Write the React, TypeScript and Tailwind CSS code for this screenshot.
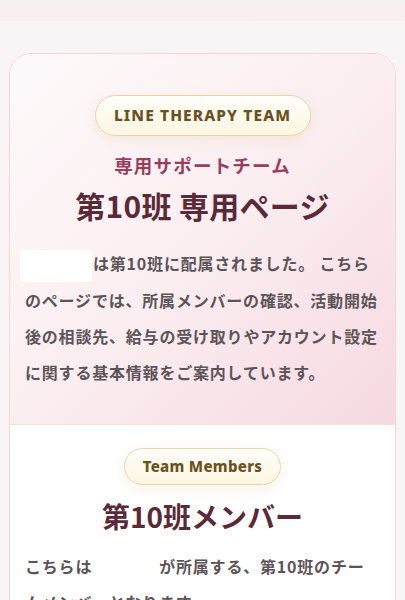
import React from "react";

const Badge = ({ children, className }: { children: React.ReactNode; className: string }) => (
  <div
    className={`mx-auto flex items-center justify-center rounded-full border border-[#e6d5a6] bg-linear-to-b from-[#fffef9] to-[#fdf6e2] font-extrabold text-[#6b5120] shadow-[0_4px_14px_rgba(214,180,120,0.18)] ${className}`}
    style={{ fontFamily: '"Noto Sans", "Noto Sans CJK JP", sans-serif' }}
  >
    {children}
  </div>
);

const Blank = () => (
  <span className="-ml-[5px] mr-[1px] inline-block h-[32px] w-[72px] rounded-[3px] bg-white align-middle" />
);

export default function App() {
  return (
    <div
      className="min-h-[600px] bg-[#f9f4f5]"
      style={{ fontFamily: '"Noto Sans CJK JP", "Noto Sans", sans-serif' }}
    >
      <div className="h-[21px] bg-linear-to-b from-[#f8eff2] to-[#faeeee]" />
      <div className="px-[9px] pt-[32px]">
        <div className="overflow-hidden rounded-t-[22px] border border-[#f3d6dc] bg-white">
          <section className="bg-linear-to-br from-[#fefafb] via-[#fbeef1] to-[#f6d9e1] px-[15px] pb-[34px] pt-[41px] text-center">
            <Badge className="h-[41px] w-[216px] text-[15.5px] tracking-[1.1px]">LINE THERAPY TEAM</Badge>
            <p className="mt-[16px] text-[18.5px] leading-[27px] font-bold tracking-[1.2px] text-[#9a3e5e]">
              専用サポートチーム
            </p>
            <h1 className="mt-[6px] text-[30px] leading-[40px] font-bold tracking-[0.3px] text-[#5a2a38]">
              第10班 専用ページ
            </h1>
            <p className="mt-[20px] text-left text-[16px] leading-[36px] font-bold tracking-[0.8px] whitespace-nowrap text-[#5d5458]">
              <Blank />
              は第10班に配属されました。 こちら
              <br />
              のページでは、所属メンバーの確認、活動開始
              <br />
              後の相談先、給与の受け取りやアカウント設定
              <br />
              に関する基本情報をご案内しています。
            </p>
          </section>
          <section className="border-t border-[#f1e4d2] bg-white px-[15px] pt-[23px] pb-[30px] text-center">
            <Badge className="h-[37px] w-[157px] text-[15px] tracking-[0.3px]">Team Members</Badge>
            <h2 className="mt-[11px] text-[28px] leading-[40px] font-bold text-[#5a2a38]">
              第10班メンバー
            </h2>
            <p className="mt-[12px] text-left text-[16px] leading-[36px] font-bold tracking-[0.8px] whitespace-nowrap text-[#5d5458]">
              こちらは<span className="inline-block w-[67px]" />が所属する、第10班のチー
              <br />
              ムメンバーとなります。
            </p>
          </section>
        </div>
      </div>
    </div>
  );
}
